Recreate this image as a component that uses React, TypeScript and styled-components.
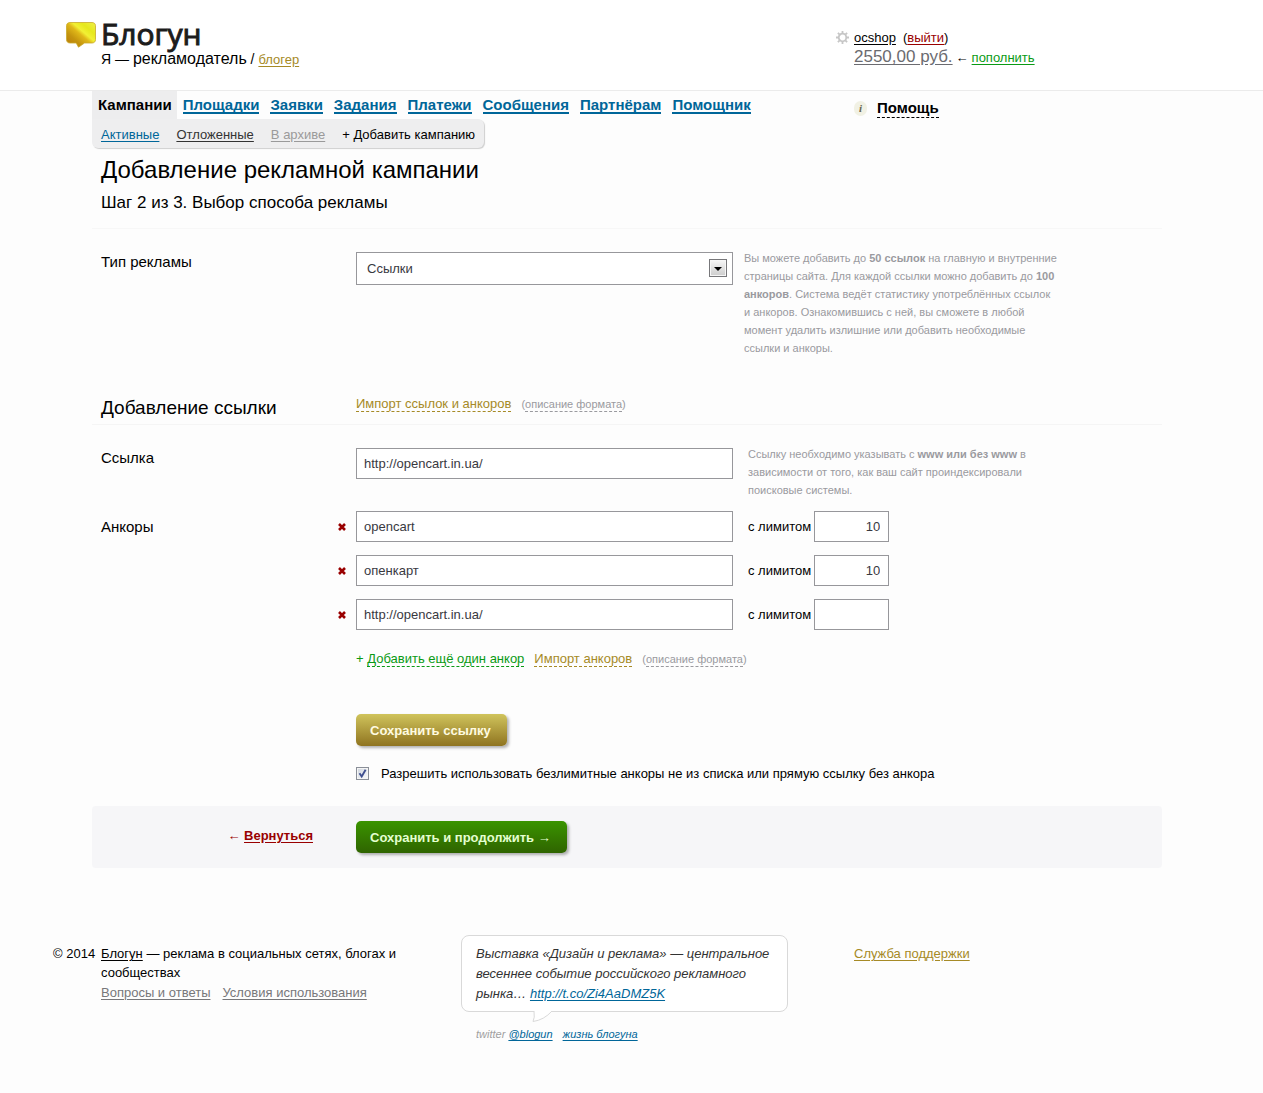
import React from 'react';
import styled, { createGlobalStyle, css } from 'styled-components';

const blue = '#006699';
const gold = '#a68a26';
const green = '#0a9a14';
const red = '#990000';
const muted = '#9a9a9f';

const GlobalStyle = createGlobalStyle`
  *, *::before, *::after { box-sizing: border-box; }
  body {
    margin: 0;
    background: #fdfdfd;
    color: #000;
    font: 13px/19px "Liberation Sans", Arial, sans-serif;
  }
  h1, h2, p { margin: 0; font-weight: normal; }
  input, select, button { font: inherit; margin: 0; }
`;

const Link = styled.a<{ $color?: string }>`
  color: ${(p) => p.$color ?? '#000'};
  text-decoration: underline;
  text-underline-offset: 2px;
`;

const DashedButton = styled.button<{ $color: string }>`
  padding: 0;
  border: 0;
  border-bottom: 1px dashed currentColor;
  background: none;
  color: ${(p) => p.$color};
  line-height: 15px;
  cursor: pointer;
`;

const Header = styled.header`
  display: grid;
  grid-template-columns: 35px 735px 1fr;
  height: 91px;
  padding: 18px 0 0 66px;
  border-bottom: 1px solid #ebebeb;
  background: #fff;
`;

const LogoMark = styled.svg`
  width: 30px;
  height: 27px;
  margin-top: 3px;
`;

const Brand = styled.div`
  font: 500 30px/32px "Open Sans", "Noto Sans", sans-serif;
  color: #1c1c1c;
  -webkit-text-stroke: 1px #1c1c1c;
`;

const Role = styled.div`
  font-size: 14px;
  line-height: 18px;
`;

const RoleName = styled.span`
  font-size: 16px;
`;

const SmallLink = styled(Link)`
  font-size: 13px;
`;

const Account = styled.div`
  display: grid;
  grid-template-columns: 18px 1fr;
  align-content: start;
  padding-top: 10px;
`;

const Gear = styled.svg`
  width: 13px;
  height: 13px;
  margin-top: 3px;
`;

const UserLine = styled.div`
  display: flex;
  gap: 7px;
`;

const BalanceLine = styled.div`
  display: flex;
  align-items: baseline;
  gap: 3px;
  grid-column: 2;
`;

const Balance = styled(Link)`
  font-size: 17px;
  color: #6b6b70;
`;

const Main = styled.main`
  padding: 0 8% 0 92px;
`;

const NavRow = styled.div`
  display: grid;
  grid-template-columns: 762px 1fr;
  align-items: start;
`;

const Tabs = styled.nav`
  display: flex;
  gap: 11px;
  font-size: 15px;
  font-weight: bold;
  line-height: 28px;
`;

const ActiveTab = styled.span`
  padding: 0 5px 0 6px;
  margin-right: -5px;
  background: #ededee;
`;

const Tab = styled.a`
  height: 23px;
  border-bottom: 2px solid ${blue};
  color: ${blue};
  text-decoration: none;
`;

const SubNav = styled.nav`
  display: flex;
  gap: 17px;
  width: fit-content;
  padding: 6px 9px 4px 9px;
  border-radius: 0 6px 6px 6px;
  background: #eeeeef;
  box-shadow: 1px 1px 1px #cfcfcf;
`;

const SubAction = styled.a`
  color: #000;
  text-decoration: none;
`;

const Help = styled.div`
  display: flex;
  align-items: center;
  gap: 10px;
  padding-top: 8px;
`;

const InfoDot = styled.span`
  width: 13px;
  height: 15px;
  border-radius: 8px;
  background: #f1f1e4;
  color: #66664e;
  font: italic bold 11px/15px "Liberation Serif", "Times New Roman", serif;
  text-align: center;
`;

const HelpButton = styled(DashedButton)`
  font-size: 15px;
  font-weight: bold;
  line-height: 18px;
`;

const Heading = styled.div`
  padding: 6px 0 14px 9px;
  border-bottom: 1px solid #f7f7f7;
`;

const Title = styled.h1`
  font-size: 24px;
  line-height: 32px;
`;

const Step = styled.p`
  padding-top: 6px;
  font-size: 17px;
  line-height: 22px;
`;

const Row = styled.div<{ $top: number; $line?: boolean }>`
  display: grid;
  grid-template-columns: 255px 377px minmax(0, 325px);
  align-items: start;
  padding: ${(p) => p.$top}px 0 0 9px;
  ${(p) => p.$line && css`
    border-bottom: 1px solid #f5f5f5;
    padding-bottom: 4px;
  `}
`;

const labelText = css`
  font-size: 15px;
  line-height: 20px;
`;

const FieldLabel = styled.label`
  ${labelText}
`;

const SectionTitle = styled.h2`
  font-size: 19px;
  line-height: 24px;
`;

const Hint = styled.p<{ $indent: number }>`
  margin-top: -3px;
  padding-left: ${(p) => p.$indent}px;
  color: ${muted};
  font-size: 11px;
  line-height: 18px;
`;

const boxed = css`
  border: 1px solid #97979b;
  border-radius: 0;
  background: #fff;
  color: #39393f;
  outline: 0;
`;

const TextInput = styled.input`
  ${boxed}
  width: 100%;
  height: 31px;
  padding: 0 7px;
`;

const SelectWrap = styled.div`
  position: relative;
`;

const Select = styled.select`
  ${boxed}
  appearance: none;
  width: 100%;
  height: 33px;
  padding: 0 30px 0 10px;
`;

const SelectArrow = styled.svg`
  position: absolute;
  top: 7px;
  right: 6px;
  width: 18px;
  height: 18px;
  pointer-events: none;
`;

const Imports = styled.div`
  display: flex;
  align-items: baseline;
  gap: 10px;
  line-height: 15px;
  white-space: nowrap;
`;

const FormatNote = styled.span`
  color: ${muted};
  font-size: 11px;
`;

const NoteButton = styled(DashedButton)`
  line-height: 13px;
`;

const Plus = styled.span`
  color: ${green};
`;

const Anchors = styled.fieldset`
  display: grid;
  grid-template-columns: 237px 1fr;
  margin: 0;
  padding: 12px 0 0 9px;
  border: 0;
`;

const AnchorsLabel = styled.div`
  ${labelText}
  padding-top: 6px;
`;

const AnchorList = styled.div`
  display: grid;
  gap: 13px;
`;

const AnchorRow = styled.div`
  display: grid;
  grid-template-columns: 18px 377px auto 75px;
  align-items: center;
  justify-content: start;
`;

const RemoveButton = styled.button`
  display: flex;
  width: 8px;
  padding: 0;
  border: 0;
  background: none;
  cursor: pointer;
`;

const LimitLabel = styled.label`
  padding: 0 3px 0 15px;
`;

const LimitInput = styled(TextInput)`
  padding: 0 8px;
  text-align: right;
`;

const FieldColumn = styled.div`
  padding-left: 264px;
`;

const AnchorTools = styled(Imports)`
  padding-top: 21px;
`;

const AddAnchor = styled.span`
  white-space: pre;
`;

const PushButton = styled.button<{ $from: string; $to: string; $text: string }>`
  height: 32px;
  padding: 0 16px 0 14px;
  border: 0;
  border-radius: 5px;
  background: linear-gradient(${(p) => p.$from}, ${(p) => p.$to});
  box-shadow: 2px 2px 3px rgba(0, 0, 0, 0.3);
  color: ${(p) => p.$text};
  font-weight: bold;
  cursor: pointer;
`;

const SaveLine = styled.div`
  padding: 47px 0 18px;
`;

const CheckLine = styled.label`
  display: flex;
  align-items: center;
  gap: 12px;
`;

const CheckBox = styled.span`
  display: grid;
  & > * { grid-area: 1 / 1; }
`;

const CheckInput = styled.input`
  appearance: none;
  width: 13px;
  height: 13px;
  border: 1px solid #8a8f98;
  background: linear-gradient(135deg, #cfd5de, #fafbfc);
  box-shadow: inset 0 0 0 1px #f5f5f5;
`;

const CheckMark = styled.svg`
  width: 13px;
  height: 13px;
  pointer-events: none;
`;

const ActionBar = styled.div`
  display: grid;
  grid-template-columns: 221px 1fr;
  gap: 43px;
  margin-top: 23px;
  padding: 15px 0;
  border-radius: 4px;
  background: #f6f6f8;
`;

const Back = styled.div`
  padding-top: 5px;
  color: ${red};
  font-weight: bold;
  text-align: right;
`;

const Footer = styled.footer`
  display: grid;
  grid-template-columns: 48px 360px 327px 1fr;
  align-items: start;
  padding: 67px 0 53px 53px;
`;

const FooterCell = styled.div<{ $indent?: number }>`
  padding: 9px 0 0 ${(p) => p.$indent ?? 0}px;
`;

const About = styled.p`
  max-width: 310px;
`;

const FooterLinks = styled.div`
  display: flex;
  gap: 12px;
  padding-top: 1px;
`;

const Tweet = styled.div`
  position: relative;
  padding: 8px 15px 7px 14px;
  border: 1px solid #d9d9d9;
  border-radius: 8px;
  background: #fff;
  color: #333;
  font-style: italic;
  line-height: 20px;
`;

const TweetTail = styled.svg`
  position: absolute;
  top: 100%;
  left: 70px;
  width: 22px;
  height: 12px;
`;

const TweetMeta = styled.div`
  display: flex;
  gap: 10px;
  padding: 13px 0 0 15px;
  color: #a0a0a0;
  font-size: 11px;
  font-style: italic;
  line-height: 18px;
`;

const sections = ['Площадки', 'Заявки', 'Задания', 'Платежи', 'Сообщения', 'Партнёрам', 'Помощник'];

const anchors = [
  { id: 'anchor-1', text: 'opencart', limit: '10' },
  { id: 'anchor-2', text: 'опенкарт', limit: '10' },
  { id: 'anchor-3', text: 'http://opencart.in.ua/', limit: '' },
];

function FormatHelp() {
  return (
    <FormatNote>
      (<NoteButton type="button" $color={muted}>описание формата</NoteButton>)
    </FormatNote>
  );
}

function SiteHeader() {
  return (
    <Header>
      <LogoMark viewBox="0 0 30 27" aria-hidden="true">
        <defs>
          <linearGradient id="bubble" x1="0" y1="1" x2="1" y2="0">
            <stop offset="0" stopColor="#b87808" />
            <stop offset="0.3" stopColor="#c4940e" />
            <stop offset="0.5" stopColor="#e0b818" />
            <stop offset="0.6" stopColor="#f2f034" />
            <stop offset="0.75" stopColor="#e6e81c" />
            <stop offset="1" stopColor="#eef04a" />
          </linearGradient>
        </defs>
        <path
          d="M4 1.5h22c2 0 3.500 1.200 3.500 3.200v14c0 2-1.500 3.300-3.500 3.300h-7.500l-6 4.200-2.300-4.200H4c-2 0-3.500-1.300-3.500-3.300v-14C.5 2.700 2 1.500 4 1.500z"
          fill="url(#bubble)"
          stroke="#c9a92a"
          strokeWidth="0.8"
        />
      </LogoMark>
      <div>
        <Brand>Блогун</Brand>
        <Role>
          Я — <RoleName>рекламодатель</RoleName> / <SmallLink href="#blogger" $color={gold}>блогер</SmallLink>
        </Role>
      </div>
      <Account>
        <Gear viewBox="0 0 13 13" fill="none" stroke="#c6c6c6" aria-hidden="true">
          <circle cx="6.500" cy="6.500" r="3.800" strokeWidth="1.800" />
          <path
            d="M6.500 0v2.500M6.500 10.500V13M0 6.500h2.500M10.500 6.500H13M1.900 1.900l1.800 1.800M9.300 9.300l1.800 1.800M1.900 11.100l1.800-1.800M9.300 3.700l1.800-1.800"
            strokeWidth="1.800"
          />
        </Gear>
        <UserLine>
          <Link href="#profile">ocshop</Link>
          <span>(<Link href="#logout" $color={red}>выйти</Link>)</span>
        </UserLine>
        <BalanceLine>
          <Balance href="#balance">2550,00 руб.</Balance>
          <span>←</span>
          <Link href="#refill" $color={green}>пополнить</Link>
        </BalanceLine>
      </Account>
    </Header>
  );
}

function Navigation() {
  return (
    <NavRow>
      <div>
        <Tabs>
          <ActiveTab>Кампании</ActiveTab>
          {sections.map((name) => (
            <Tab key={name} href="#section">{name}</Tab>
          ))}
        </Tabs>
        <SubNav>
          <Link href="#active" $color={blue}>Активные</Link>
          <Link href="#postponed" $color="#333">Отложенные</Link>
          <Link href="#archive" $color="#9a9a9a">В архиве</Link>
          <SubAction href="#add">+ Добавить кампанию</SubAction>
        </SubNav>
      </div>
      <Help>
        <InfoDot aria-hidden="true">i</InfoDot>
        <HelpButton type="button" $color="#000">Помощь</HelpButton>
      </Help>
    </NavRow>
  );
}

function CampaignForm() {
  return (
    <form onSubmit={(e) => e.preventDefault()}>
      <Row $top={23}>
        <FieldLabel htmlFor="kind">Тип рекламы</FieldLabel>
        <SelectWrap>
          <Select id="kind" defaultValue="links">
            <option value="links">Ссылки</option>
          </Select>
          <SelectArrow viewBox="0 0 18 18" aria-hidden="true">
            <defs>
              <linearGradient id="arrow" x1="0" y1="0" x2="0" y2="1">
                <stop offset="0" stopColor="#f4f4f4" />
                <stop offset="1" stopColor="#cfcfcf" />
              </linearGradient>
            </defs>
            <rect x="0.500" y="0.500" width="17" height="17" fill="#f6f6f6" stroke="#77777a" />
            <rect x="2" y="2" width="14" height="14" fill="url(#arrow)" />
            <path d="M5 8h8l-4 4z" fill="#000" />
          </SelectArrow>
        </SelectWrap>
        <Hint $indent={11}>
          Вы можете добавить до <b>50 ссылок</b> на главную и внутренние страницы сайта. Для каждой
          ссылки можно добавить до <b>100 анкоров</b>. Система ведёт статистику употреблённых ссылок
          и анкоров. Ознакомившись с ней, вы сможете в любой момент удалить излишние или добавить
          необходимые ссылки и анкоры.
        </Hint>
      </Row>

      <Row $top={39} $line>
        <SectionTitle>Добавление ссылки</SectionTitle>
        <Imports>
          <DashedButton type="button" $color={gold}>Импорт ссылок и анкоров</DashedButton>
          <FormatHelp />
        </Imports>
      </Row>

      <Row $top={23}>
        <FieldLabel htmlFor="url">Ссылка</FieldLabel>
        <TextInput id="url" defaultValue="http://opencart.in.ua/" />
        <Hint $indent={15}>
          Ссылку необходимо указывать с <b>www или без www</b> в зависимости от того, как ваш сайт
          проиндексировали поисковые системы.
        </Hint>
      </Row>

      <Anchors aria-labelledby="anchors-label">
        <AnchorsLabel id="anchors-label">Анкоры</AnchorsLabel>
        <AnchorList>
          {anchors.map((a) => (
            <AnchorRow key={a.id}>
              <RemoveButton type="button" aria-label="Удалить">
                <svg width="8" height="8" viewBox="0 0 8 8" aria-hidden="true">
                  <path d="M1 1l6 6M7 1L1 7" stroke={red} strokeWidth="2.600" />
                </svg>
              </RemoveButton>
              <TextInput aria-labelledby="anchors-label" defaultValue={a.text} />
              <LimitLabel htmlFor={a.id}>с лимитом</LimitLabel>
              <LimitInput id={a.id} defaultValue={a.limit} />
            </AnchorRow>
          ))}
        </AnchorList>
      </Anchors>

      <FieldColumn>
        <AnchorTools>
          <AddAnchor>
            <Plus>+ </Plus>
            <DashedButton type="button" $color={green}>Добавить ещё один анкор</DashedButton>
          </AddAnchor>
          <DashedButton type="button" $color={gold}>Импорт анкоров</DashedButton>
          <FormatHelp />
        </AnchorTools>
        <SaveLine>
          <PushButton type="button" $from="#d0c45c" $to="#8f7420" $text="#fffbe0">
            Сохранить ссылку
          </PushButton>
        </SaveLine>
        <CheckLine>
          <CheckBox>
            <CheckInput type="checkbox" defaultChecked />
            <CheckMark viewBox="0 0 13 13" aria-hidden="true">
              <path d="M3.500 6.200l2.200 3.300L9.600 2.800" fill="none" stroke="#3f4f8f" strokeWidth="1.900" />
            </CheckMark>
          </CheckBox>
          Разрешить использовать безлимитные анкоры не из списка или прямую ссылку без анкора
        </CheckLine>
      </FieldColumn>

      <ActionBar>
        <Back>
          ← <Link href="#back" $color={red}>Вернуться</Link>
        </Back>
        <div>
          <PushButton type="submit" $from="#3a9400" $to="#2f6400" $text="#e4ffd0">
            Сохранить и продолжить →
          </PushButton>
        </div>
      </ActionBar>
    </form>
  );
}

function SiteFooter() {
  return (
    <Footer>
      <FooterCell>© 2014</FooterCell>
      <FooterCell>
        <About>
          <Link href="#home">Блогун</Link> — реклама в социальных сетях, блогах и сообществах
        </About>
        <FooterLinks>
          <Link href="#faq" $color="#77777a">Вопросы и ответы</Link>
          <Link href="#terms" $color="#77777a">Условия использования</Link>
        </FooterLinks>
      </FooterCell>
      <div>
        <Tweet>
          Выставка «Дизайн и реклама» — центральное весеннее событие российского рекламного рынка…{' '}
          <Link href="#tweet" $color={blue}>http://t.co/Zi4AaDMZ5K</Link>
          <TweetTail viewBox="0 0 22 12" aria-hidden="true">
            <path d="M2 0h18v1H2z" fill="#fff" />
            <path d="M2 0q1 7-1 10.500Q12 9 20 0" fill="#fff" stroke="#d9d9d9" />
          </TweetTail>
        </Tweet>
        <TweetMeta>
          <span>twitter <Link href="#blogun" $color={blue}>@blogun</Link></span>
          <Link href="#life" $color={blue}>жизнь блогуна</Link>
        </TweetMeta>
      </div>
      <FooterCell $indent={66}>
        <Link href="#support" $color={gold}>Служба поддержки</Link>
      </FooterCell>
    </Footer>
  );
}

export default function App() {
  return (
    <>
      <GlobalStyle />
      <SiteHeader />
      <Main>
        <Navigation />
        <Heading>
          <Title>Добавление рекламной кампании</Title>
          <Step>Шаг 2 из 3. Выбор способа рекламы</Step>
        </Heading>
        <CampaignForm />
      </Main>
      <SiteFooter />
    </>
  );
}
